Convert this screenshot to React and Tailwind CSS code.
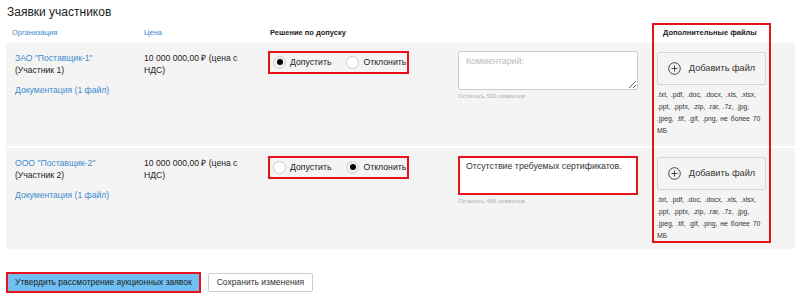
import React from "react";

function Radio({ checked, label }) {
  return (
    <div className="flex items-center">
      <div className={`w-[13px] h-[13px] rounded-full border border-[#cfcfcf] flex items-center justify-center ${checked ? "bg-[#f0f0f0]" : "bg-white"}`}>
        {checked && <div className="w-[6px] h-[6px] rounded-full bg-black" />}
      </div>
      <span className="ml-[4px] text-[8.7px] text-[#222]">{label}</span>
    </div>
  );
}

function PlusIcon() {
  return (
    <svg width="13" height="13" viewBox="0 0 13 13" fill="none">
      <circle cx="6.5" cy="6.5" r="5.8" stroke="#444" strokeWidth="1" />
      <path d="M6.5 3.5v6M3.5 6.5h6" stroke="#444" strokeWidth="1" />
    </svg>
  );
}

function Files() {
  return (
    <div className="w-[109px] flex flex-col">
      <div className="h-[33px] border border-[#d4d4d4] rounded-[2px] bg-[#f4f4f4] flex items-center justify-center gap-[8px]">
        <PlusIcon />
        <span className="text-[9.2px] text-[#333]">Добавить файл</span>
      </div>
      <div className="mt-[4px] text-[6.8px] leading-[12px] text-[#333] whitespace-nowrap [word-spacing:1px]">
        <div>.txt, .pdf, .doc, .docx, .xls, .xlsx,</div>
        <div>.ppt, .pptx, .zip, .rar, .7z, .jpg,</div>
        <div>.jpeg, .tif, .gif, .png, не более 70</div>
        <div>МБ</div>
      </div>
    </div>
  );
}

function Row({ org, num, first, comment, remaining, h }) {
  return (
    <div className={`flex bg-[#f4f4f4] ${h}`}>
      <div className="w-[138px] pl-[9px] pt-[9px] text-[8.6px] leading-[12px]">
        <div className="text-[#3d8bcd]">{org}</div>
        <div className="text-[#222]">(Участник {num})</div>
        <div className="text-[#3d8bcd] mt-[8px]">Документация (1 файл)</div>
      </div>
      <div className="w-[124px] pt-[9px] text-[8.6px] leading-[12px] text-[#222]">
        <div>10 000 000,00 ₽ (цена с</div>
        <div>НДС)</div>
      </div>
      <div className="w-[190px] pt-[8px]">
        <div className="w-[141px] h-[23px] border-2 border-[#e8121b] flex items-center pl-[3px] gap-[15px]">
          <Radio checked={first} label="Допустить" />
          <Radio checked={!first} label="Отклонить" />
        </div>
      </div>
      <div className="w-[199px] pt-[8px]">
        {comment ? (
          <div className="w-[180px] h-[39px] border-2 border-[#e8121b] bg-white px-[6px] pt-[2px] text-[8.8px] text-[#333] whitespace-nowrap">
            Отсутствие требуемых сертификатов.
          </div>
        ) : (
          <textarea
            className="block w-[180px] h-[39px] border border-[#ccc] rounded-[2px] bg-white px-[7px] pt-[3px] text-[8.8px] text-[#333] placeholder:text-[#bbb] resize-y outline-none"
            placeholder="Комментарий:"
          />
        )}
        <div className="mt-[2px] text-[6px] text-[#b0b0b0]">Осталось {remaining} символов</div>
      </div>
      <div className="pt-[9px]">
        <Files />
      </div>
    </div>
  );
}

export default function App() {
  return (
    <div className="w-[800px] h-[299px] bg-white relative overflow-hidden font-['Liberation_Sans',Arial,sans-serif]">
      <div className="pl-[7px] pt-[3px] text-[12px] leading-[18px] text-[#222]">Заявки участников</div>
      <div className="flex h-[20px] items-center pl-[12px] mt-[2px] text-[7.5px]">
        <div className="w-[132px] text-[#3d8bcd]">Организация</div>
        <div className="w-[126px] text-[#3d8bcd]">Цена</div>
        <div className="w-[393px] font-bold text-[#222]">Решение по допуску</div>
        <div className="font-bold text-[#222]">Дополнительные файлы</div>
      </div>
      <div className="ml-[6px] w-[789px] flex flex-col gap-[2px]">
        <Row org={'ЗАО "Поставщик-1"'} num={1} first={true} comment={false} remaining={500} h="h-[103px]" />
        <Row org={'ООО "Поставщик-2"'} num={2} first={false} comment={true} remaining={466} h="h-[101px]" />
      </div>
      <div className="flex items-center gap-[7px] ml-[6px] mt-[23px]">
        <div className="h-[21px] px-[7px] border-2 border-[#e8121b] bg-[#6fbff3] flex items-center text-[8.5px] text-[#222]">
          Утвердить рассмотрение аукционных заявок
        </div>
        <div className="h-[19px] px-[8px] border border-[#ccc] rounded-[2px] bg-white flex items-center text-[8.5px] text-[#333]">
          Сохранить изменения
        </div>
      </div>
      <div className="absolute left-[652px] top-[23px] w-[119px] h-[220px] border-2 border-[#e8121b] pointer-events-none" />
    </div>
  );
}
